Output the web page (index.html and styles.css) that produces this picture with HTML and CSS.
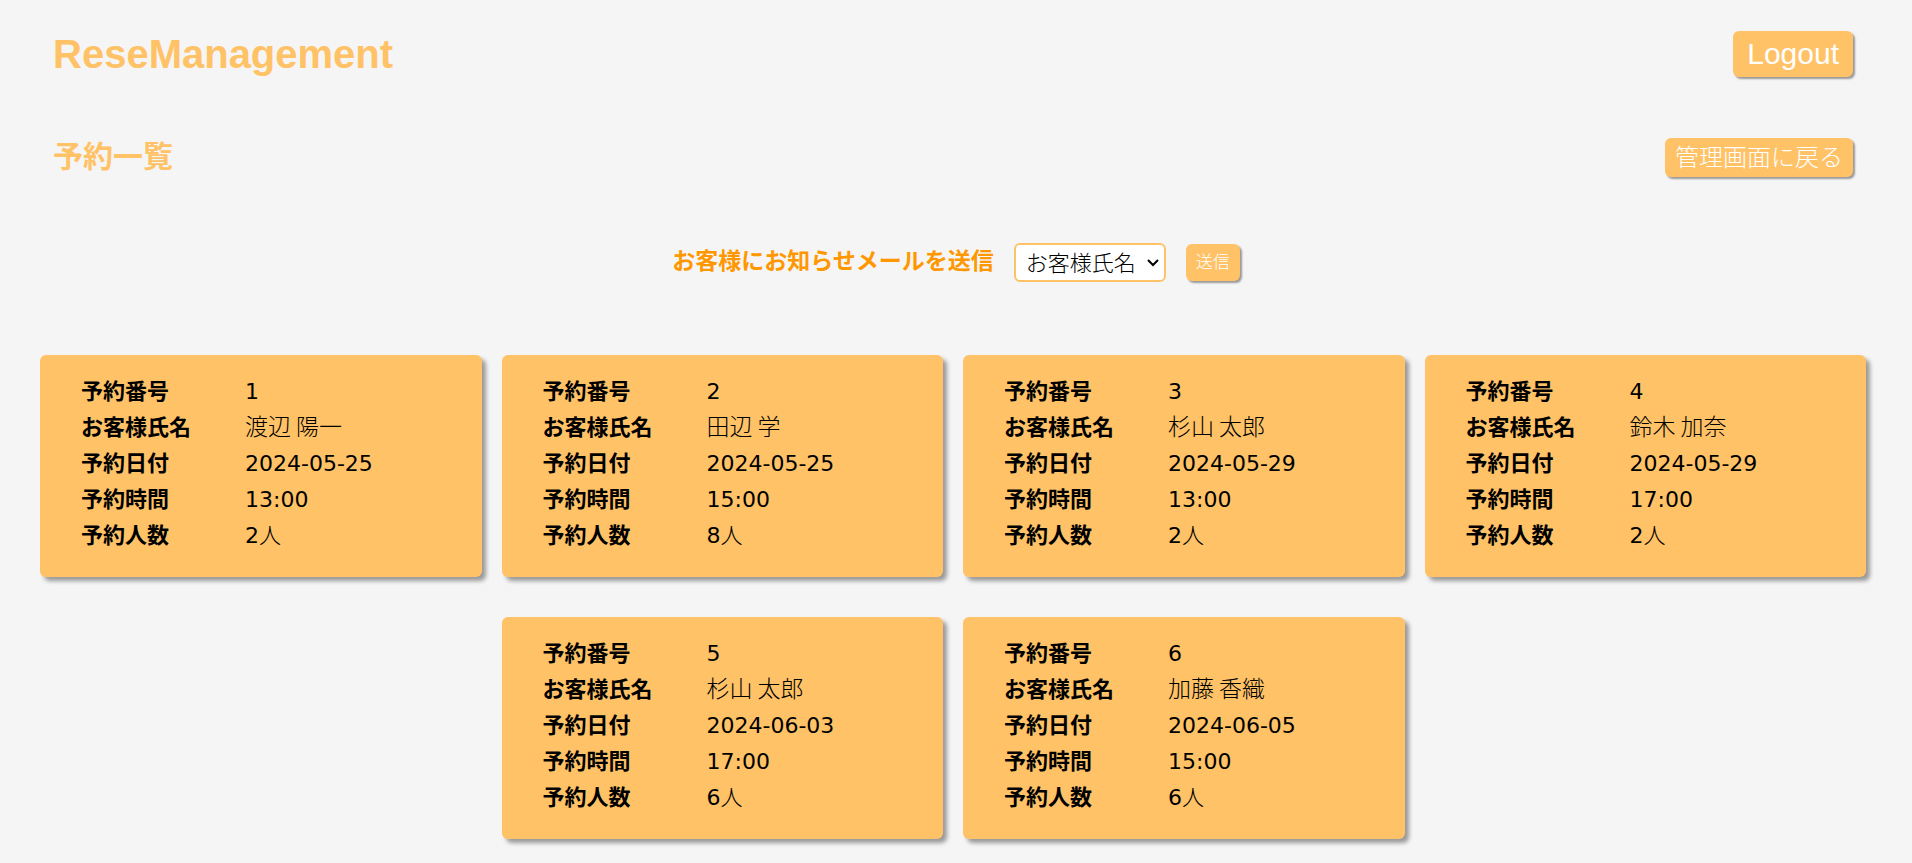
FILE: index.html
```html
<!DOCTYPE html>
<html lang="ja">
<head>
<meta charset="utf-8">
<title>ReseManagement</title>
<link rel="stylesheet" href="styles.css">
</head>
<body>
<header class="header">
  <h1 class="header__logo">ReseManagement</h1>
  <button class="button button--logout" type="submit">Logout</button>
</header>
<main>
  <div class="heading">
    <h2 class="heading__title">予約一覧</h2>
    <a class="button button--back" href="#">管理画面に戻る</a>
  </div>
  <form class="mail">
    <label class="mail__label" for="customer">お客様にお知らせメールを送信</label>
    <select class="mail__select" id="customer" name="customer">
      <option>お客様氏名</option>
    </select>
    <button class="button button--send" type="button">送信</button>
  </form>
  <div class="cards">
    <table class="card">
      <tr><th scope="row">予約番号</th><td>1</td></tr>
      <tr><th scope="row">お客様氏名</th><td class="name">渡辺 陽一</td></tr>
      <tr><th scope="row">予約日付</th><td>2024-05-25</td></tr>
      <tr><th scope="row">予約時間</th><td>13:00</td></tr>
      <tr><th scope="row">予約人数</th><td>2<span class="unit">人</span></td></tr>
    </table>
    <table class="card">
      <tr><th scope="row">予約番号</th><td>2</td></tr>
      <tr><th scope="row">お客様氏名</th><td class="name">田辺 学</td></tr>
      <tr><th scope="row">予約日付</th><td>2024-05-25</td></tr>
      <tr><th scope="row">予約時間</th><td>15:00</td></tr>
      <tr><th scope="row">予約人数</th><td>8<span class="unit">人</span></td></tr>
    </table>
    <table class="card">
      <tr><th scope="row">予約番号</th><td>3</td></tr>
      <tr><th scope="row">お客様氏名</th><td class="name">杉山 太郎</td></tr>
      <tr><th scope="row">予約日付</th><td>2024-05-29</td></tr>
      <tr><th scope="row">予約時間</th><td>13:00</td></tr>
      <tr><th scope="row">予約人数</th><td>2<span class="unit">人</span></td></tr>
    </table>
    <table class="card">
      <tr><th scope="row">予約番号</th><td>4</td></tr>
      <tr><th scope="row">お客様氏名</th><td class="name">鈴木 加奈</td></tr>
      <tr><th scope="row">予約日付</th><td>2024-05-29</td></tr>
      <tr><th scope="row">予約時間</th><td>17:00</td></tr>
      <tr><th scope="row">予約人数</th><td>2<span class="unit">人</span></td></tr>
    </table>
    <table class="card">
      <tr><th scope="row">予約番号</th><td>5</td></tr>
      <tr><th scope="row">お客様氏名</th><td class="name">杉山 太郎</td></tr>
      <tr><th scope="row">予約日付</th><td>2024-06-03</td></tr>
      <tr><th scope="row">予約時間</th><td>17:00</td></tr>
      <tr><th scope="row">予約人数</th><td>6<span class="unit">人</span></td></tr>
    </table>
    <table class="card">
      <tr><th scope="row">予約番号</th><td>6</td></tr>
      <tr><th scope="row">お客様氏名</th><td class="name">加藤 香織</td></tr>
      <tr><th scope="row">予約日付</th><td>2024-06-05</td></tr>
      <tr><th scope="row">予約時間</th><td>15:00</td></tr>
      <tr><th scope="row">予約人数</th><td>6<span class="unit">人</span></td></tr>
    </table>
  </div>
</main>
</body>
</html>
```
FILE: styles.css
```css
* {
  box-sizing: border-box;
}

body {
  margin: 0;
  background: #f5f5f5;
  color: #000;
  font-family: "DejaVu Sans", "Noto Sans CJK JP", sans-serif;
  font-size: 22px;
}

.header,
.heading {
  display: flex;
  align-items: center;
  justify-content: space-between;
  padding: 0 59px 0 53px;
}

.header {
  padding-top: 31px;
}

.heading {
  margin-top: 61px;
}

.header__logo,
.heading__title {
  margin: 0;
  color: #ffc267;
}

.header__logo {
  font-family: "Liberation Sans", Arial, sans-serif;
  font-size: 40px;
  line-height: 46px;
}

.heading__title {
  padding-bottom: 7px;
  font-family: "Noto Sans CJK JP", sans-serif;
  font-size: 30px;
  line-height: 32px;
}

.button {
  border: 0;
  border-radius: 6px;
  background: #ffc267;
  box-shadow: 2px 2px 2px #999;
  color: #fff;
  font-family: "Noto Sans CJK JP", sans-serif;
  font-weight: 400;
  text-decoration: none;
}

.button--logout {
  padding: 0 14px;
  font-family: "Liberation Sans", Arial, sans-serif;
  font-size: 30px;
  line-height: 46px;
}

.button--back {
  padding: 0 10px 4px;
  font-size: 24px;
  font-weight: 300;
  line-height: 35px;
}

.button--send {
  padding: 0 10px 4px;
  font-size: 17px;
  font-weight: 300;
  line-height: 33px;
}

.mail {
  display: flex;
  align-items: center;
  justify-content: center;
  gap: 20px;
  margin-top: 66px;
}

.mail__label {
  padding-bottom: 6px;
  color: #ff9800;
  font-family: "Noto Sans CJK JP", sans-serif;
  font-size: 23px;
  font-weight: 700;
  line-height: 33px;
}

.mail__select {
  appearance: none;
  width: 152px;
  height: 39px;
  padding: 0 10px 5px;
  border: 2px solid #ffc267;
  border-radius: 6px;
  background: #fff url("data:image/svg+xml,%3Csvg xmlns='http://www.w3.org/2000/svg' width='12' height='8'%3E%3Cpath d='M1 1l5 5 5-5' fill='none' stroke='%23000' stroke-width='2'/%3E%3C/svg%3E") no-repeat right 5px center;
  color: #000;
  font-family: "Noto Sans CJK JP", sans-serif;
  font-size: 22px;
  font-weight: 300;
}

.cards {
  display: flex;
  flex-wrap: wrap;
  justify-content: center;
  gap: 40px 20px;
  margin-top: 73px;
  padding: 0 46px 24px 40px;
}

.card {
  display: block;
  width: calc((100% - 60px) / 4);
  padding: 18px 41px 24px;
  border-radius: 6px;
  border-spacing: 0;
  background: #ffc267;
  box-shadow: 4px 4px 4px #999;
}

.card th,
.card td {
  height: 36px;
  padding: 2px 0 0;
  line-height: 34px;
  text-align: left;
  vertical-align: top;
  white-space: nowrap;
}

.card th {
  width: 164px;
  min-width: 164px;
  padding: 0 0 3px;
  font-family: "Noto Sans CJK JP", sans-serif;
  font-weight: 700;
  line-height: 33px;
}

.card .name {
  padding: 0 0 3px;
  font-family: "Noto Sans CJK JP", sans-serif;
  font-size: 23px;
  font-weight: 300;
  line-height: 33px;
}

.unit {
  font-family: "Noto Sans CJK JP", sans-serif;
  font-weight: 300;
  line-height: 1;
}
```
